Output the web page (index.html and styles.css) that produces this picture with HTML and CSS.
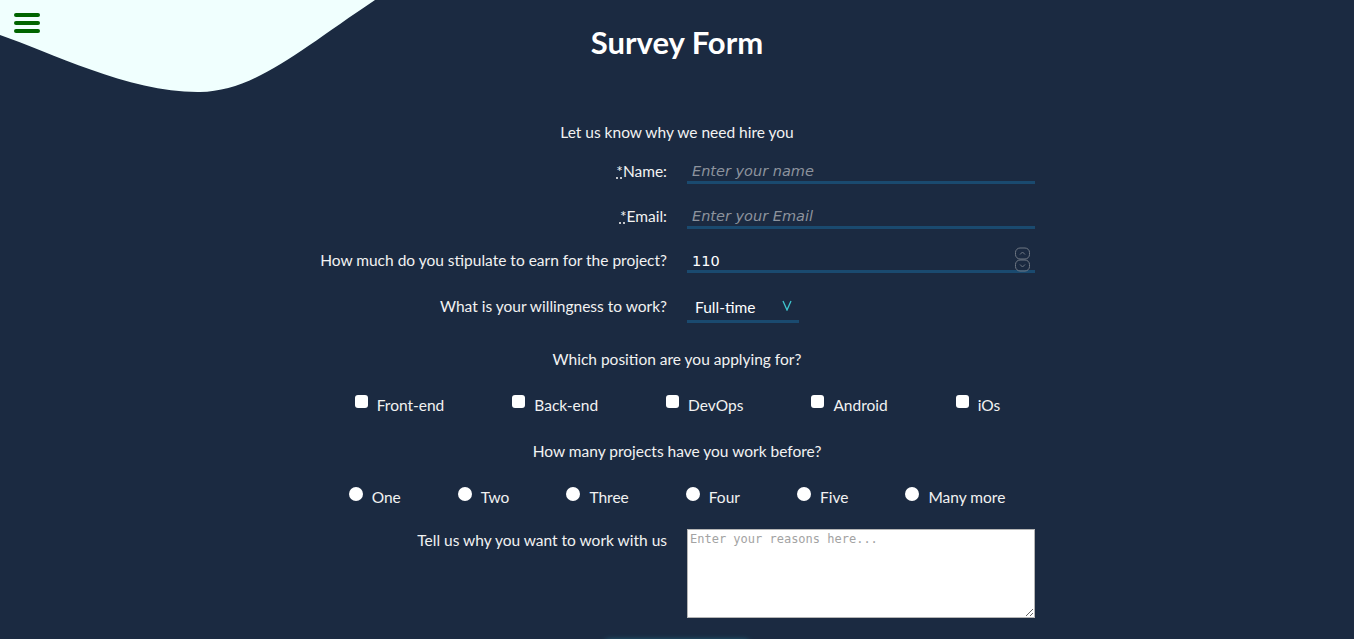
FILE: index.html
```html
<!DOCTYPE html>
<html lang="en">
<head>
<meta charset="utf-8">
<title>Survey Form</title>
<link rel="stylesheet" href="styles.css">
</head>
<body>
<svg class="wave" width="380" height="96" viewBox="0 0 380 96" aria-hidden="true">
  <path d="M0,0 L0,35 C50,52 130,93 200,92 C255,91 300,50 375,0 Z" fill="#f0fffe"/>
</svg>
<button class="menu" type="button" aria-label="menu">
  <svg width="26" height="22" viewBox="0 0 26 22">
    <line x1="2" y1="3" x2="24" y2="3" stroke="#006400" stroke-width="4" stroke-linecap="round"/>
    <line x1="2" y1="11" x2="24" y2="11" stroke="#006400" stroke-width="4" stroke-linecap="round"/>
    <line x1="2" y1="19" x2="24" y2="19" stroke="#006400" stroke-width="4" stroke-linecap="round"/>
  </svg>
</button>
<h1 class="title">Survey Form</h1>
<form class="survey">
  <p class="intro">Let us know why we need hire you</p>
  <div class="row row-name">
    <label class="lbl" for="name"><abbr title="required">*</abbr>Name:</label>
    <input class="field" id="name" type="text" placeholder="Enter your name">
  </div>
  <div class="row row-email">
    <label class="lbl" for="email"><abbr title="required">*</abbr>Email:</label>
    <input class="field" id="email" type="email" placeholder="Enter your Email">
  </div>
  <div class="row row-num">
    <label class="lbl" for="num">How much do you stipulate to earn for the project?</label>
    <div class="num-wrap">
      <input class="field num" id="num" type="number" value="110">
      <svg class="spin" width="17" height="25" viewBox="0 0 17 25" aria-hidden="true">
        <rect x="1.5" y="1" width="14" height="11" rx="4.5" fill="none" stroke="#6f7783" stroke-width="1"/>
        <rect x="1.5" y="13" width="14" height="11" rx="4.5" fill="none" stroke="#6f7783" stroke-width="1"/>
        <polyline points="6,7.5 8.5,5 11,7.5" fill="none" stroke="#6f7783" stroke-width="1"/>
        <polyline points="6,17.5 8.5,20 11,17.5" fill="none" stroke="#6f7783" stroke-width="1"/>
      </svg>
    </div>
  </div>
  <div class="row row-select">
    <label class="lbl lbl-select" for="work">What is your willingness to work?</label>
    <div class="select-wrap">
      <select class="select" id="work">
        <option>Full-time</option>
        <option>Part-time</option>
      </select>
      <svg class="arrow" width="10" height="11" viewBox="0 0 10 11" aria-hidden="true"><polyline points="1,1 5,10 9,1" fill="none" stroke="#3fc6cf" stroke-width="1.3"/></svg>
    </div>
  </div>
  <p class="question q-pos">Which position are you applying for?</p>
  <div class="choices checks">
    <label class="opt"><input type="checkbox" class="box">Front-end</label>
    <label class="opt"><input type="checkbox" class="box">Back-end</label>
    <label class="opt"><input type="checkbox" class="box">DevOps</label>
    <label class="opt"><input type="checkbox" class="box">Android</label>
    <label class="opt"><input type="checkbox" class="box">iOs</label>
  </div>
  <p class="question q-proj">How many projects have you work before?</p>
  <div class="choices radios">
    <label class="opt"><input type="radio" name="p" class="dot">One</label>
    <label class="opt"><input type="radio" name="p" class="dot">Two</label>
    <label class="opt"><input type="radio" name="p" class="dot">Three</label>
    <label class="opt"><input type="radio" name="p" class="dot">Four</label>
    <label class="opt"><input type="radio" name="p" class="dot">Five</label>
    <label class="opt"><input type="radio" name="p" class="dot">Many more</label>
  </div>
  <div class="row row-text">
    <label class="lbl lbl-top" for="why">Tell us why you want to work with us</label>
    <textarea class="area" id="why" placeholder="Enter your reasons here..."></textarea>
  </div>
  <div class="submit-row">
    <button class="submit" type="submit" aria-label="Submit"></button>
  </div>
</form>
</body>
</html>
```
FILE: styles.css
```css
html, body {
  margin: 0;
  padding: 0;
}
body {
  background: #1b2a41;
  color: #f2f2f2;
  font-family: Lato, "Noto Sans", sans-serif;
  font-size: 15.5px;
  line-height: 20px;
  position: relative;
  height: 639px;
  overflow: hidden;
}
.wave {
  position: absolute;
  left: 0;
  top: 0;
  display: block;
}
.menu {
  position: absolute;
  left: 14px;
  top: 12px;
  padding: 0;
  margin: 0;
  border: 0;
  background: transparent;
  width: 26px;
  height: 22px;
}
.menu svg { display: block; }
.title {
  position: relative;
  margin: 24px 0 0;
  text-align: center;
  font-size: 31px;
  line-height: 36px;
  font-weight: 700;
  color: #ffffff;
}
.survey {
  margin: 0;
  display: flex;
  flex-direction: column;
}
.intro, .question {
  margin: 0;
  text-align: center;
}
.intro { margin-top: 62px; }
.row {
  display: grid;
  grid-template-columns: 1fr 1fr;
  column-gap: 20px;
  align-items: center;
}
.lbl { text-align: right; }
.lbl-select { padding-bottom: 5px; }
abbr {
  text-decoration: underline dotted;
}
.row-name { margin-top: 16px; }
.row-email { margin-top: 19px; }
.row-num { margin-top: 18px; }
.row-select { margin-top: 20px; }
.field {
  box-sizing: border-box;
  width: 348px;
  height: 26px;
  margin: 0;
  padding: 2px 5px 0;
  background: transparent;
  border: 0;
  border-bottom: 3px solid #1a4a6f;
  color: #ffffff;
  font-family: "DejaVu Sans", sans-serif;
  font-size: 14.5px;
  outline: none;
}
.field::placeholder {
  color: #8d939d;
  font-style: italic;
}
.num-wrap {
  position: relative;
  width: 348px;
}
.num { display: block; padding-top: 4px; }
.num::-webkit-inner-spin-button,
.num::-webkit-outer-spin-button {
  -webkit-appearance: none;
  margin: 0;
}
.num { -moz-appearance: textfield; }
.spin {
  position: absolute;
  left: 327px;
  top: 0;
}
.select-wrap {
  position: relative;
  width: 112px;
}
.select {
  box-sizing: border-box;
  width: 112px;
  height: 30px;
  margin: 0;
  padding: 0 8px;
  appearance: none;
  -webkit-appearance: none;
  background: transparent;
  border: 0;
  border-bottom: 3px solid #1a4a6f;
  border-radius: 0;
  color: #ffffff;
  font-family: Lato, "Noto Sans", sans-serif;
  font-size: 15.5px;
  outline: none;
}
.select option { color: #000; }
.arrow {
  position: absolute;
  left: 95px;
  top: 7px;
}
.q-pos { margin-top: 26px; }
.q-proj { margin-top: 26px; }
.choices {
  display: flex;
  justify-content: center;
  margin-top: 26px;
}
.checks { gap: 68px; padding-left: 1px; }
.radios { gap: 57px; }
.opt {
  display: flex;
  align-items: flex-start;
  gap: 9px;
}
.box, .dot {
  appearance: none;
  -webkit-appearance: none;
  margin: 0;
  background: #ffffff;
  border: 0;
  flex: none;
}
.box {
  width: 13px;
  height: 13px;
  border-radius: 3px;
}
.dot {
  width: 14px;
  height: 14px;
  border-radius: 50%;
}
.row-text {
  margin-top: 22px;
  align-items: start;
}
.lbl-top { padding-top: 1px; }
.area {
  box-sizing: border-box;
  width: 348px;
  height: 89px;
  margin: 0;
  padding: 2px;
  background: #ffffff;
  border: 1px solid #b5b5b5;
  font-family: "DejaVu Sans Mono", monospace;
  font-size: 12px;
  line-height: 14px;
  color: #222;
}
.area::placeholder { color: #a3a3a3; }
.submit-row {
  display: flex;
  justify-content: center;
  margin-top: 23px;
}
.submit {
  width: 144px;
  height: 36px;
  border: 0;
  border-radius: 4px;
  background: #1a3550;
  box-shadow: 0 0 6px #2a8aa0;
}
```
